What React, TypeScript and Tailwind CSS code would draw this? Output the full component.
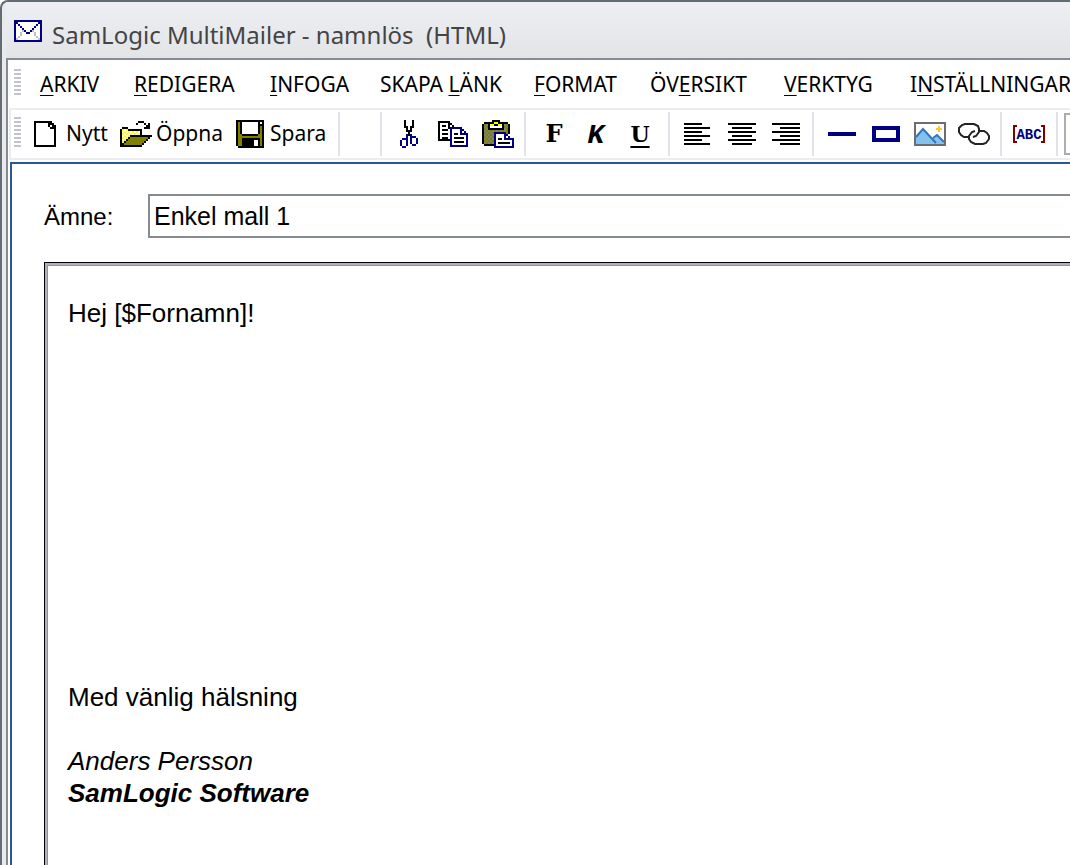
import React, { useState } from 'react';

interface MenuItem {
  before: string;
  key: string;
  after: string;
  width: string;
}

const menuItems: MenuItem[] = [
  { before: '', key: 'A', after: 'RKIV', width: 'w-[94px]' },
  { before: '', key: 'R', after: 'EDIGERA', width: 'w-[136px]' },
  { before: '', key: 'I', after: 'NFOGA', width: 'w-[110px]' },
  { before: 'SKAPA ', key: 'L', after: 'ÄNK', width: 'w-[154px]' },
  { before: '', key: 'F', after: 'ORMAT', width: 'w-[116px]' },
  { before: 'ÖV', key: 'E', after: 'RSIKT', width: 'w-[134px]' },
  { before: '', key: 'V', after: 'ERKTYG', width: 'w-[126px]' },
  { before: 'I', key: 'N', after: 'STÄLLNINGAR', width: 'w-[160px]' },
];

const palette: { [key: string]: string } = {
  K: '#000000',
  W: '#ffffff',
  B: '#000080',
  O: '#808000',
  Y: '#ffff00',
  G: '#808080',
  L: '#c0c0c0',
};

const envelope = [
  'BBBBBBBBBBBBBB',
  'BBWWWWWWWWWWBB',
  'BWBWWWWWWWWBWB',
  'BWWBWWWWWWBWWB',
  'BWWWBWWWWBWWWB',
  'BWWWLBWWBLWWWB',
  'BWWLWWBBWWLWWB',
  'BWWLWWWWWWLWWB',
  'BWLWWWWWWWWLWB',
  'BLWWWWWWWWWWLB',
  'BBBBBBBBBBBBBB',
];

const newDoc = [
  'KKKKKKKKK..',
  'KWWWWWWKKK.',
  'KWWWWWWKWKK',
  'KWWWWWWWKKK',
  'KWWWWWWWWWK',
  'KWWWWWWWWWK',
  'KWWWWWWWWWK',
  'KWWWWWWWWWK',
  'KWWWWWWWWWK',
  'KWWWWWWWWWK',
  'KWWWWWWWWWK',
  'KWWWWWWWWWK',
  'KKKKKKKKKKK',
];

const openFolder = [
  '.........KKK....',
  '........K...K.K.',
  '.............KK.',
  '.KKK........KKK.',
  'KYWYKKKKKKK.....',
  'KWYWYWYWYWK.....',
  'KYWYWYWYWYK.....',
  'KWYWYKKKKKKKKKKK',
  'KYWYKOOOOOOOOOK.',
  'KWYKOOOOOOOOOK..',
  'KYKOOOOOOOOOK...',
  'KKOOOOOOOOOK....',
  'KKKKKKKKKKK.....',
];

const floppy = [
  'KKKKKKKKKKKKKK',
  'KOKWWWWWWWWKWK',
  'KOKWWWWWWWWKKK',
  'KOKWWWWWWWWKOK',
  'KOKWWWWWWWWKOK',
  'KOKWWWWWWWWKOK',
  'KOKWWWWWWWWKOK',
  'KOOKKKKKKKKOOK',
  'KOOOOOOOOOOOOK',
  'KOOKKKKKKKKKOK',
  'KOOKKKKKKWWKOK',
  'KOOKKKKKKWWKOK',
  'KOOKKKKKKWWKOK',
  '.KKKKKKKKKKKKK',
];

const scissors = [
  '..K...K..',
  '..K...K..',
  '..K...K..',
  '..KK.KK..',
  '...K.K...',
  '...KKK...',
  '....K....',
  '...BKB...',
  '...B.BBB.',
  '.BBB.B..B',
  'B..B.B..B',
  'B..B.B..B',
  'B..B..BB.',
  '.BB......',
];

const copyPages = [
  'KKKKKK.........',
  'KWWWWKK........',
  'KWKKWKWK.......',
  'KWWWWKBBBBBB...',
  'KWKKKWBWWWWBB..',
  'KWWWWWBWWWWBWB.',
  'KWKKKWBWKKWBBBB',
  'KWWWWWBWWWWWWWB',
  'KWKKKWBWKKKKKWB',
  'KKKKKKBWWWWWWWB',
  '......BWKKKKKWB',
  '......BWWWWWWWB',
  '......BBBBBBBBB',
];

const clipboard = [
  '.....KKKK.......',
  '.KKKKKYYKKKKK...',
  'KOGKYYKKYYKGOK..',
  'KGOKWWWWWWKOGK..',
  'KOGKKKKKKKKGOK..',
  'KGOGOGOGOGOGOK..',
  'KOGOGOBBBBBBOK..',
  'KGOGOGBWWWWBB...',
  'KOGOGOBWWWWBWB..',
  'KGOGOGBWKKWBBBBB',
  'KOGOGOBWWWWWWWWB',
  'KGOGOGBWKKKKKKWB',
  '.KKKKKBWWWWWWWWB',
  '......BBBBBBBBBB',
];

const PixelIcon: React.FC<{ rows: string[] }> = ({ rows }) => (
  <svg
    width={rows[0].length * 2}
    height={rows.length * 2}
    viewBox={`0 0 ${rows[0].length} ${rows.length}`}
    shapeRendering="crispEdges"
    className="shrink-0"
    aria-hidden="true"
  >
    {rows.map((row, y) =>
      row.split('').map((cell, x) =>
        cell === '.' ? null : <rect key={`${x}-${y}`} x={x} y={y} width="1" height="1" fill={palette[cell]} />
      )
    )}
  </svg>
);

// Each line is [left, width] inside the icon
const AlignIcon: React.FC<{ lines: number[][] }> = ({ lines }) => (
  <svg width="28" height="22" shapeRendering="crispEdges" aria-hidden="true">
    {[0, 1, 2, 3, 4, 5].map((i) => (
      <rect key={i} x={lines[i % 2][0]} y={i * 4} width={lines[i % 2][1]} height="2" />
    ))}
  </svg>
);

const PictureIcon = () => (
  <svg width="32" height="24" viewBox="0 0 32 24" aria-hidden="true">
    <rect x="1" y="1" width="30" height="22" fill="#ffffff" />
    <path d="M2 15 L9 7 L19 17 L23 13 L30 20 V22 H2 Z" fill="#84c1f0" />
    <path d="M2 15 L9 7 L22 21 M19 16 L23 13 L30 20" fill="none" stroke="#2f78b7" strokeWidth="2" />
    <path d="M25 4 V10 M22 7 H28" stroke="#ffc62e" strokeWidth="2" />
    <rect x="1" y="1" width="30" height="22" fill="none" stroke="#6d6d6d" strokeWidth="2" />
  </svg>
);

const LinkIcon = () => (
  <svg width="32" height="22" viewBox="0 0 32 22" fill="none" stroke="#222222" strokeWidth="2" aria-hidden="true">
    <path d="M10 14 H6 L3 12 L1 9 V5 L4 2 L7 1 H16 L20 3 L21 6 V9 L18 13 L15 14" />
    <path d="M22 8 H26 L29 10 L31 13 V16 L28 20 L25 21 H17 L13 19 L11 16 V13 L14 9 L17 8" />
  </svg>
);

const FieldIcon = () => (
  <svg width="34" height="20" viewBox="0 0 34 20" aria-hidden="true">
    <path d="M5 2 H2 V18 H5 M29 2 H32 V18 H29" fill="none" stroke="#800000" strokeWidth="2" />
    <text x="17" y="15" textAnchor="middle" fill="#000080" className="font-['Liberation_Mono',monospace] text-[14px] font-bold">
      ABC
    </text>
  </svg>
);

const Grip: React.FC<{ count: number }> = ({ count }) => (
  <div className="mb-1 flex w-[7px] shrink-0 flex-col gap-[2px]">
    {Array.from({ length: count }).map((_, i) => (
      <span key={i} className="h-[2px] bg-[#c2c3cb]" />
    ))}
  </div>
);

const Separator = () => <div className="h-11 w-[2px] shrink-0 bg-[#e2e2e8]" />;

const ToolButton: React.FC<{ label: string; width: string; children: React.ReactNode }> = ({ label, width, children }) => (
  <button type="button" aria-label={label} title={label} className={`flex h-11 shrink-0 items-center justify-center ${width}`}>
    {children}
  </button>
);

const TextButton: React.FC<{ label: string; width: string; gap: string; rows: string[] }> = ({ label, width, gap, rows }) => (
  <button type="button" className={`flex h-11 shrink-0 items-center whitespace-nowrap ${width} ${gap}`}>
    <PixelIcon rows={rows} />
    <span>{label}</span>
  </button>
);

const App: React.FC = () => {
  const [subject, setSubject] = useState('Enkel mall 1');

  return (
    <div className="h-screen overflow-hidden bg-white font-['Liberation_Sans',Arial,sans-serif] text-black">
      <div className="flex h-full flex-col rounded-tl-lg border-t-2 border-l-2 border-[#636b73] bg-[#e9eaee] pl-1">
        {/* Title bar */}
        <header className="flex h-14 shrink-0 items-center gap-[10px] bg-linear-to-b from-[#eeeff2] to-[#e2e4e8] pt-[2px] pl-2">
          <PixelIcon rows={envelope} />
          <h1 className="whitespace-pre pt-2 font-['Noto_Sans',sans-serif] text-[24px] leading-8 text-[#444444]">
            SamLogic MultiMailer - namnlös  (HTML)
          </h1>
        </header>

        <div className="flex min-h-0 flex-1 flex-col border-t-2 border-l-2 border-[#868b93] bg-white">
          {/* Menu */}
          <nav className="flex h-12 shrink-0 items-center overflow-hidden pl-[6px] font-['Noto_Sans',sans-serif] text-[21px]">
            <Grip count={7} />
            <div className="flex pl-[19px]">
              {menuItems.map((item) => (
                <button
                  key={item.before + item.key + item.after}
                  type="button"
                  className={`shrink-0 whitespace-pre text-left leading-8 ${item.width}`}
                >
                  {item.before}
                  <span className="underline decoration-1 underline-offset-3">{item.key}</span>
                  {item.after}
                </button>
              ))}
            </div>
          </nav>

          {/* Toolbar */}
          <div
            role="toolbar"
            className="ml-px flex h-[52px] shrink-0 items-center overflow-hidden border-y-2 border-l-2 border-[#ececf1] pl-[3px] font-['Noto_Sans',sans-serif] text-[21px]"
          >
            <Grip count={8} />
            <div className="flex items-center pl-[13px]">
              <TextButton label="Nytt" width="w-[86px]" gap="gap-[10px]" rows={newDoc} />
              <TextButton label="Öppna" width="w-[116px]" gap="gap-1" rows={openFolder} />
              <TextButton label="Spara" width="w-[102px]" gap="gap-[6px]" rows={floppy} />
              <Separator />
              <div className="w-10 shrink-0" />
              <Separator />
              <div className="flex w-[142px] shrink-0 pl-1">
                <ToolButton label="Klipp ut" width="w-[46px]">
                  <PixelIcon rows={scissors} />
                </ToolButton>
                <ToolButton label="Kopiera" width="w-[42px]">
                  <PixelIcon rows={copyPages} />
                </ToolButton>
                <ToolButton label="Klistra in" width="w-[48px]">
                  <PixelIcon rows={clipboard} />
                </ToolButton>
              </div>
              <Separator />
              <div className="flex w-[142px] shrink-0 pl-[6px] font-['DejaVu_Serif',serif] text-[22px] font-bold">
                <ToolButton label="Fet" width="w-11">
                  <b className="text-[24px]">F</b>
                </ToolButton>
                <ToolButton label="Kursiv" width="w-10">
                  <i className="pt-1 font-['Liberation_Mono',monospace] text-[28px]">K</i>
                </ToolButton>
                <ToolButton label="Understruken" width="w-12">
                  <span className="underline decoration-2 underline-offset-4">U</span>
                </ToolButton>
              </div>
              <Separator />
              <div className="flex w-[142px] shrink-0 pl-[6px]">
                <ToolButton label="Vänsterjustera" width="w-11">
                  <AlignIcon lines={[[0, 18], [0, 26]]} />
                </ToolButton>
                <ToolButton label="Centrera" width="w-11">
                  <AlignIcon lines={[[0, 28], [4, 20]]} />
                </ToolButton>
                <ToolButton label="Högerjustera" width="w-11">
                  <AlignIcon lines={[[0, 28], [8, 20]]} />
                </ToolButton>
              </div>
              <Separator />
              <div className="flex w-[186px] shrink-0 pl-[6px]">
                <ToolButton label="Linje" width="w-11">
                  <span className="h-1 w-7 bg-[#000080]" />
                </ToolButton>
                <ToolButton label="Ram" width="w-11">
                  <span className="h-4 w-7 border-4 border-[#000080]" />
                </ToolButton>
                <ToolButton label="Bild" width="w-11">
                  <PictureIcon />
                </ToolButton>
                <ToolButton label="Länk" width="w-11">
                  <LinkIcon />
                </ToolButton>
              </div>
              <Separator />
              <ToolButton label="Fält" width="w-[54px]">
                <FieldIcon />
              </ToolButton>
              <Separator />
              <select
                aria-label="Teckensnitt"
                className="ml-[6px] h-[42px] w-40 shrink-0 appearance-none border-2 border-[#acacac] bg-white"
              />
            </div>
          </div>

          {/* Message */}
          <main className="mt-[2px] ml-[2px] flex min-h-0 flex-1 flex-col border-t-2 border-l-2 border-[#2b579a] pl-8">
            <div className="mt-[30px] flex h-11 shrink-0 items-center">
              <label htmlFor="subject" className="w-[104px] shrink-0 pt-[2px] text-[24px]">
                Ämne:
              </label>
              <input
                id="subject"
                type="text"
                value={subject}
                onChange={(e) => setSubject(e.target.value)}
                className="h-full min-w-0 flex-1 border-2 border-r-0 border-[#868a91] pl-1 text-[25px] outline-none"
              />
            </div>

            <div className="mt-6 flex min-h-0 flex-1 border-t border-l border-black">
              <div className="flex-1 border-t-2 border-l-2 border-[#b0b1ba]">
                <article className="h-full border-t border-l border-[#8d93a8] pt-[31px] pl-5 text-[26px] leading-8">
                  <p>Hej [$Fornamn]!</p>
                  <p className="mt-[352px]">Med vänlig hälsning</p>
                  <p className="mt-8 italic">Anders Persson</p>
                  <p className="font-bold italic">SamLogic Software</p>
                </article>
              </div>
            </div>
          </main>
        </div>
      </div>
    </div>
  );
};

export default App;
